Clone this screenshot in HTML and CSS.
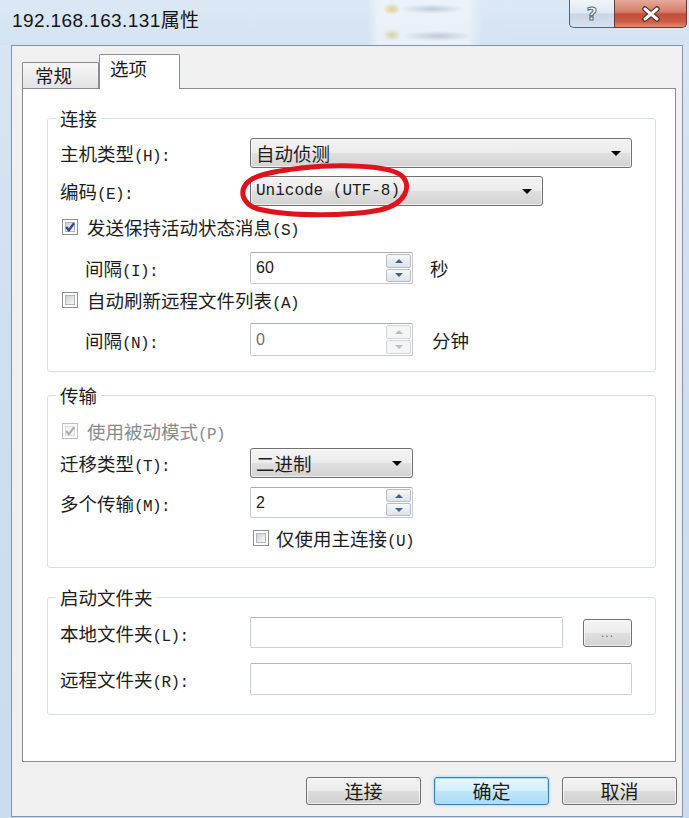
FILE: index.html
```html
<!DOCTYPE html>
<html lang="zh-CN">
<head>
<meta charset="utf-8">
<title>192.168.163.131属性</title>
<link rel="stylesheet" href="styles.css">
</head>
<body>
<div class="window">
  <header class="titlebar">
    <div class="title">192.168.163.131属性</div>
    <div class="caption">
      <div class="cap cap-help"><span class="q">?</span></div>
      <div class="cap cap-close">
        <svg width="22" height="16" viewBox="0 0 22 16"><path d="M5 3 L17 13 M17 3 L5 13" stroke="#5a2c24" stroke-width="5.5" stroke-linecap="round"/><path d="M5 3 L17 13 M17 3 L5 13" stroke="#ffffff" stroke-width="3" stroke-linecap="round"/></svg>
      </div>
    </div>
  </header>
  <main class="client">
    <div class="tabs">
      <div class="tab">常规</div>
      <div class="tab active">选项</div>
    </div>
    <section class="panel">
      <fieldset class="group g1">
        <legend>连接</legend>
        <div class="row a1"><span class="label">主机类型<span class="k">(H):</span></span><div class="combo w382"><span class="val">自动侦测</span><span class="arrow"></span></div></div>
        <div class="row a2"><span class="label">编码<span class="k">(E):</span></span><div class="combo w293"><span class="val mono">Unicode (UTF-8)</span><span class="arrow"></span></div>
          <svg class="ring" width="170" height="54" viewBox="0 0 170 54"><path d="M60 4 C100 0 150 1 162 12 C172 22 166 40 140 46 C110 52 50 53 18 45 C2 40 0 28 6 20 C12 12 30 7 72 3" fill="none" stroke="#e0131c" stroke-width="5" stroke-linecap="round"/></svg>
        </div>
        <div class="row a3"><span class="cb checked"><svg width="16" height="16" viewBox="0 0 16 16"><path d="M4.2 8 L6.8 11.2 L12 4.3" fill="none" stroke="#2f4a8f" stroke-width="2.4"/></svg></span><span class="cbtext">发送保持活动状态消息<span class="k">(S)</span></span></div>
        <div class="row a4"><span class="label indent">间隔<span class="k">(I):</span></span><div class="spin w163"><span class="val">60</span><span class="spin-btns"><span class="sb up"></span><span class="sb down"></span></span></div><span class="unit">秒</span></div>
        <div class="row a5"><span class="cb"></span><span class="cbtext">自动刷新远程文件列表<span class="k">(A)</span></span></div>
        <div class="row a6"><span class="label indent">间隔<span class="k">(N):</span></span><div class="spin w163 disabled"><span class="val">0</span><span class="spin-btns"><span class="sb up"></span><span class="sb down"></span></span></div><span class="unit unit2">分钟</span></div>
      </fieldset>

      <fieldset class="group g2">
        <legend>传输</legend>
        <div class="row b1"><span class="cb checked disabled"><svg width="16" height="16" viewBox="0 0 16 16"><path d="M4.2 8 L6.8 11.2 L12 4.3" fill="none" stroke="#a9b0bd" stroke-width="2.2"/></svg></span><span class="cbtext dim">使用被动模式<span class="k">(P)</span></span></div>
        <div class="row b2"><span class="label">迁移类型<span class="k">(T):</span></span><div class="combo w163"><span class="val">二进制</span><span class="arrow"></span></div></div>
        <div class="row b3"><span class="label">多个传输<span class="k">(M):</span></span><div class="spin w163"><span class="val">2</span><span class="spin-btns"><span class="sb up"></span><span class="sb down"></span></span></div></div>
        <div class="row b4"><span class="cb"></span><span class="cbtext near">仅使用主连接<span class="k">(U)</span></span></div>
      </fieldset>

      <fieldset class="group g3">
        <legend>启动文件夹</legend>
        <div class="row c1"><span class="label">本地文件夹<span class="k">(L):</span></span><div class="textbox w313"></div><button class="browse">...</button></div>
        <div class="row c2"><span class="label">远程文件夹<span class="k">(R):</span></span><div class="textbox w382"></div></div>
      </fieldset>
    </section>
    <div class="buttons">
      <button class="btn">连接</button>
      <button class="btn default">确定</button>
      <button class="btn">取消</button>
    </div>
  </main>
</div>
</body>
</html>
```
FILE: styles.css
```css
* { box-sizing: border-box; }
html, body { margin: 0; padding: 0; }
body {
  width: 689px;
  height: 818px;
  overflow: hidden;
  font-family: "Noto Sans CJK SC", "Noto Sans", sans-serif;
  font-size: 18.5px;
  color: #1c1c1c;
  background: linear-gradient(180deg, #d8e6f4 0%, #cddeef 50%, #cadcef 100%);
}
.window { display: flex; flex-direction: column; height: 818px; }

/* title bar */
.titlebar {
  height: 45px;
  flex: none;
  display: flex;
  align-items: flex-start;
  background:
    radial-gradient(ellipse 9px 6px at 392px 9px, rgba(222, 196, 96, .75), transparent),
    radial-gradient(ellipse 9px 6px at 392px 35px, rgba(205, 196, 110, .65), transparent),
    radial-gradient(ellipse 32px 5px at 432px 9px, rgba(110, 132, 165, .35), transparent),
    radial-gradient(ellipse 36px 5px at 438px 36px, rgba(110, 132, 165, .35), transparent),
    linear-gradient(90deg, transparent 368px, rgba(255, 255, 255, .45) 378px, rgba(255, 255, 255, .45) 468px, transparent 482px),
    linear-gradient(180deg, #dce8f5 0%, #d4e3f2 100%);
}
.title {
  font-family: "Liberation Sans", "Noto Sans CJK SC", sans-serif;
  font-size: 19px;
  letter-spacing: .4px;
  line-height: 24px;
  padding: 9px 0 0 12px;
  color: #141414;
}
.caption { margin-left: auto; margin-right: 2px; display: flex; }
.cap {
  height: 28px;
  display: flex;
  align-items: center;
  justify-content: center;
  border: 1px solid #51627a;
  border-top: none;
}
.cap-help {
  width: 45px;
  border-right: none;
  border-radius: 0 0 0 5px;
  background: linear-gradient(180deg, #f1f5fa 0%, #dfe8f2 48%, #c8d5e4 52%, #d7e2ee 100%);
}
.cap-help .q {
  font-family: "DejaVu Sans", sans-serif;
  font-weight: bold;
  font-size: 18px;
  line-height: 1;
  color: #ffffff;
  -webkit-text-stroke: 1px #56667c;
}
.cap-close {
  width: 73px;
  border-color: #6b3930;
  border-radius: 0 0 5px 0;
  background: linear-gradient(180deg, #e6aa9b 0%, #d57b69 45%, #c44b3c 52%, #cd5b45 80%, #e48d6e 100%);
}

/* client area */
.client {
  flex: none;
  height: 772px;
  margin: 0 6px 0 11px;
  border: 1px solid #8194ad;
  background: #f0f0f0;
  padding: 8px 5px 0 10px;
  display: flex;
  flex-direction: column;
}

/* tabs */
.tabs { display: flex; align-items: flex-end; height: 34px; flex: none; }
.tab {
  height: 26px;
  width: 77px;
  border: 1px solid #898c95;
  border-bottom: none;
  border-radius: 2px 2px 0 0;
  background: linear-gradient(180deg, #f7f7f7, #e3e3e3);
  padding-left: 12px;
  line-height: 24px;
}
.tab.active {
  height: 35px;
  width: 81px;
  margin-bottom: -1px;
  background: #ffffff;
  position: relative;
  z-index: 1;
  padding-left: 10px;
  padding-top: 1px;
}

/* panel */
.panel {
  width: 654px;
  height: 674px;
  flex: none;
  background: #ffffff;
  border: 1px solid #898c95;
  padding: 17px 19px 0 24px;
  display: flex;
  flex-direction: column;
}

.group {
  margin: 0;
  padding: 0 12px;
  border: 1px solid #d5dfe5;
  border-radius: 3px;
  min-width: 0;
}
.group legend { margin-left: -4px; padding: 0 4px; line-height: 24px; }
.g1 { padding-bottom: 15px; }
.g2 { margin-top: 11px; padding-bottom: 17px; }
.g3 { margin-top: 17px; padding-bottom: 19px; }

.row { display: flex; align-items: center; position: relative; }
.a1 { margin-top: 8px; height: 30px; }
.a2 { margin-top: 8px; height: 30px; }
.a3 { margin-top: 8px; height: 26px; }
.a4 { margin-top: 12px; height: 32px; }
.a5 { margin-top: 4px; height: 24px; }
.a6 { margin-top: 11px; height: 33px; }
.b1 { margin-top: 12px; height: 24px; }
.b2 { margin-top: 5px; height: 30px; }
.b3 { margin-top: 9px; height: 31px; }
.b4 { margin-top: 8px; height: 24px; padding-left: 193px; }
.c1 { margin-top: 8px; height: 31px; }
.c2 { margin-top: 15px; height: 32px; }

.label { width: 190px; flex: none; white-space: nowrap; }
.label.indent { padding-left: 25px; }
.k { font-family: "Liberation Mono", monospace; font-size: 16px; letter-spacing: -0.6px; }

.w382 { width: 382px; }
.w293 { width: 293px; }
.w163 { width: 163px; }
.w313 { width: 313px; }

/* combo box */
.combo {
  height: 100%;
  flex: none;
  border: 1px solid #707070;
  border-radius: 3px;
  background: linear-gradient(180deg, #f4f4f4 0%, #ececec 48%, #dfdfdf 52%, #d3d3d3 100%);
  display: flex;
  align-items: center;
  padding: 0 10px 0 5px;
  box-shadow: inset 0 0 0 1px rgba(255, 255, 255, .6);
}
.combo .val { white-space: nowrap; }
.combo .mono { font-family: "Liberation Mono", monospace; font-size: 16px; }
.combo .arrow {
  margin-left: auto;
  width: 0;
  height: 0;
  border-left: 5px solid transparent;
  border-right: 5px solid transparent;
  border-top: 5px solid #000000;
}

.ring { position: absolute; left: 180px; top: -12px; overflow: visible; }

/* checkbox */
.cb {
  width: 16px;
  height: 16px;
  flex: none;
  margin-left: 2px;
  border: 1px solid #8e8f8f;
  background: #ffffff;
  padding: 2px;
  position: relative;
  display: flex;
}
.cb::before {
  content: "";
  flex: 1;
  border: 1px solid #b2b7be;
  background: linear-gradient(135deg, #cdd2d9 0%, #e6e8ec 60%, #f7f7f7 100%);
}
.cb svg { position: absolute; left: -1px; top: -1px; }
.cb.disabled { border-color: #c0c0c0; }
.cb.disabled::before { border-color: #dcdcdc; background: #f4f4f4; }
.cbtext { margin-left: 9px; white-space: nowrap; }
.cbtext.near { margin-left: 7px; }
.cbtext.dim { color: #8a8a8a; }
.b4 .cb { margin-left: 0; }

/* spinner */
.spin {
  height: 100%;
  flex: none;
  display: flex;
  background: #ffffff;
  border: 1px solid #c5c9cf;
  border-top-color: #a9acb3;
  border-radius: 2px;
}
.spin .val {
  flex: 1;
  display: flex;
  align-items: center;
  padding-left: 5px;
  font-family: "Liberation Sans", sans-serif;
  font-size: 16px;
}
.spin.disabled .val { color: #6d6d6d; }
.spin-btns {
  width: 26px;
  display: flex;
  flex-direction: column;
  gap: 1px;
  padding: 1px 1px 1px 0;
}
.sb {
  flex: 1;
  border: 1px solid #b6bdc8;
  border-radius: 2px;
  background: linear-gradient(180deg, #f5f7fa, #dde3eb);
  display: flex;
  align-items: center;
  justify-content: center;
}
.sb.up::after {
  content: "";
  border-left: 4px solid transparent;
  border-right: 4px solid transparent;
  border-bottom: 4px solid #4e5d78;
}
.sb.down::after {
  content: "";
  border-left: 4px solid transparent;
  border-right: 4px solid transparent;
  border-top: 4px solid #4e5d78;
}
.spin.disabled .sb { border-color: #d3d7dd; background: #f4f5f7; }
.spin.disabled .sb.up::after { border-bottom-color: #b9bec6; }
.spin.disabled .sb.down::after { border-top-color: #b9bec6; }
.unit { margin-left: 17px; }
.unit.unit2 { margin-left: 19px; }

/* text box */
.textbox {
  height: 100%;
  flex: none;
  background: #ffffff;
  border: 1px solid #ccd0d5;
  border-top-color: #b3b6bc;
  border-radius: 2px;
}
.browse {
  width: 49px;
  height: 28px;
  margin: 0 0 0 20px;
  padding: 0;
  border: 1px solid #707070;
  border-radius: 3px;
  background: linear-gradient(180deg, #f4f4f4 0%, #ececec 48%, #dfdfdf 52%, #d3d3d3 100%);
  font-family: "Liberation Sans", sans-serif;
  font-size: 12px;
  letter-spacing: 1px;
  color: #6a6a6a;
  box-shadow: inset 0 0 0 1px rgba(255, 255, 255, .6);
}

/* dialog buttons */
.buttons {
  display: flex;
  justify-content: flex-end;
  gap: 13px;
  margin-top: 15px;
  flex: none;
}
.btn {
  width: 115px;
  height: 28px;
  margin: 0;
  padding: 0;
  border: 1px solid #707070;
  border-radius: 3px;
  background: linear-gradient(180deg, #f3f3f3 0%, #ebebeb 48%, #dddddd 52%, #cfcfcf 100%);
  font-family: "Noto Sans CJK SC", sans-serif;
  font-size: 19px;
  line-height: 24px;
  color: #1c1c1c;
  box-shadow: inset 0 0 0 1px rgba(255, 255, 255, .7);
}
.btn.default {
  border-color: #3c7fb1;
  background: linear-gradient(180deg, #eaf7fe 0%, #d3effc 48%, #bfe6fa 52%, #a9dcf6 100%);
  box-shadow: inset 0 0 0 1px #a6e2fb, 0 0 3px rgba(70, 170, 225, .5);
}
```
